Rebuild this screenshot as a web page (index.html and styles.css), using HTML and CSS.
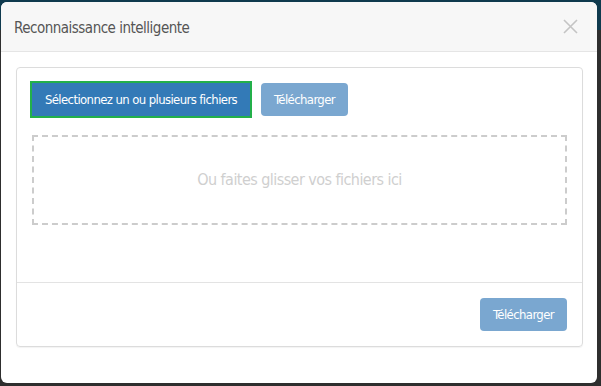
FILE: index.html
```html
<!DOCTYPE html>
<html lang="fr">
<head>
  <meta charset="UTF-8" />
  <title>Reconnaissance intelligente</title>
  <meta name="viewport" content="width=device-width, initial-scale=1.0" />
  <link rel="stylesheet" href="styles.css">
</head>
<body>

<div class="modal">
  <div class="modal-header">
    <h4 class="modal-title">Reconnaissance intelligente</h4>
    <button class="close" aria-label="Fermer">
      <svg width="15" height="15" viewBox="0 0 15 15">
        <path d="M1 1 L14 14 M14 1 L1 14" stroke="#c4c4c4" stroke-width="1.6" fill="none" />
      </svg>
    </button>
  </div>

  <div class="modal-body">
    <div class="panel">
      <div class="panel-body">
        <div class="actions">
          <button class="btn btn-primary focused">Sélectionnez un ou plusieurs fichiers</button>
          <button class="btn btn-primary disabled">Télécharger</button>
        </div>
        <div class="dropzone">Ou faites glisser vos fichiers ici</div>
      </div>
      <div class="panel-footer">
        <button class="btn btn-primary disabled">Télécharger</button>
      </div>
    </div>
  </div>
</div>

</body>
</html>
```

FILE: styles.css
```css
body {
  margin: 0;
  height: 386px;
  font-family: "DejaVu Sans Condensed", "Liberation Sans", sans-serif;
  background: linear-gradient(#0f3a4e 0, #0f3a4e 30px, #2e2e2e 30px);
  padding: 2px 4px 3px 1px;
  box-sizing: border-box;
  overflow: hidden;
}
.modal {
  background: white;
  border-radius: 6px;
  height: 381px;
  overflow: hidden;
}
.modal-header {
  height: 49px;
  background: #f7f7f7;
  border-bottom: 1px solid #e5e5e5;
  display: flex;
  align-items: center;
  justify-content: space-between;
  padding: 0 19px 0 13px;
}
.modal-title {
  margin: 0;
  font-weight: normal;
  font-size: 15px;
  letter-spacing: -0.5px;
  color: #555;
  padding-top: 3px;
}
.close {
  background: none;
  border: none;
  padding: 0;
  display: flex;
  cursor: pointer;
}
.modal-body {
  padding: 15px 14px 15px 15px;
}
.panel {
  border: 1px solid #dcdcdc;
  border-radius: 4px;
  box-shadow: 0 1px 1px rgba(0,0,0,0.05);
}
.panel-body {
  height: 215px;
  padding: 15px;
  box-sizing: border-box;
  border-bottom: 1px solid #e3e3e3;
}
.actions {
  display: flex;
  gap: 11px;
}
.btn {
  font-family: inherit;
  font-size: 13px;
  letter-spacing: -0.6px;
  white-space: nowrap;
  color: white;
  height: 33px;
  padding: 0;
  border: none;
  border-radius: 4px;
  cursor: pointer;
}
.btn-primary {
  background: #337ab7;
}
.btn.focused {
  width: 218px;
  border-radius: 0;
  outline: 2px solid #23b04a;
}
.btn.disabled {
  background: #7aa7d0;
  width: 87px;
}
.dropzone {
  margin-top: 19px;
  height: 90px;
  border: 2px dashed #cccccc;
  box-sizing: border-box;
  display: flex;
  align-items: center;
  justify-content: center;
  color: #cfcfcf;
  font-size: 16px;
  letter-spacing: -0.55px;
  padding-bottom: 2px;
}
.panel-footer {
  padding: 15px;
  display: flex;
  justify-content: flex-end;
}
```
